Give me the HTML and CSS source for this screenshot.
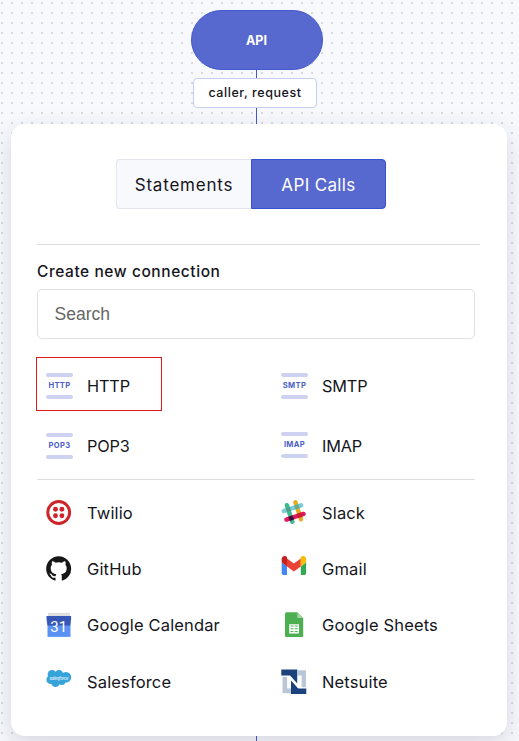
FILE: index.html
```html
<!DOCTYPE html>
<html lang="en">
<head>
<meta charset="utf-8">
<title>API connection</title>
<link rel="stylesheet" href="styles.css">
</head>
<body>
<main class="canvas">
  <div class="flow">
    <div class="start-node">API</div>
    <div class="line line-short"></div>
    <div class="params">caller, request</div>
    <div class="line line-long"></div>
  </div>
  <section class="panel">
    <div class="tabs"><button class="tab tab-statements">Statements</button><button class="tab tab-calls">API Calls</button></div>
    <hr class="rule rule-top">
    <h2 class="heading">Create new connection</h2>
    <div class="search">Search</div>
    <div class="grid protocols">
      <div class="item"><span class="proto">HTTP</span><span class="label caps">HTTP</span></div>
      <div class="item"><span class="proto">SMTP</span><span class="label caps">SMTP</span></div>
      <div class="item"><span class="proto">POP3</span><span class="label caps">POP3</span></div>
      <div class="item raised"><span class="proto">IMAP</span><span class="label caps">IMAP</span></div>
      <div class="highlight"></div>
    </div>
    <hr class="rule rule-mid">
    <div class="grid services">
      <div class="item">
        <svg class="icon" viewBox="0 0 26 26"><circle cx="12.7" cy="12.5" r="10.9" fill="none" stroke="#ce252b" stroke-width="3"/><g fill="#ce252b"><circle cx="9.5" cy="9.3" r="2.45"/><circle cx="15.9" cy="9.3" r="2.45"/><circle cx="9.5" cy="15.7" r="2.45"/><circle cx="15.9" cy="15.7" r="2.45"/></g></svg>
        <span class="label">Twilio</span></div>
      <div class="item">
        <svg class="icon" viewBox="0 0 26 26"><g stroke-width="4.4" stroke-linecap="round" fill="none"><path stroke="#3eb991" d="M5.9 5.2l5.4 16.6"/><path stroke="#e3ab20" d="M14.4 2.3l5.6 16.9"/><path stroke="#7acbdb" d="M2.9 11l17.2-5.7"/><path stroke="#e01765" d="M5.4 19.6l17.2-5.7"/><g stroke-linecap="butt"><path stroke="#4aa283" d="M6.7 7.5l1.4 4.2"/><path stroke="#6ca982" d="M15.2 4.7l1.4 4.2"/><path stroke="#361238" d="M9.5 16.1l1.4 4.2"/><path stroke="#cc2027" d="M18 13.2l1.4 4.2"/></g></g></svg>
        <span class="label">Slack</span></div>
      <div class="item">
        <svg class="icon" viewBox="0 0 16 16"><path transform="translate(.1 .1) scale(.963)" fill="#181717" fill-rule="evenodd" d="M8 0C3.58 0 0 3.58 0 8c0 3.54 2.29 6.53 5.47 7.59.4.07.55-.17.55-.38 0-.19-.01-.82-.01-1.49-2.01.37-2.53-.49-2.69-.94-.09-.23-.48-.94-.82-1.13-.28-.15-.68-.52-.01-.53.63-.01 1.08.58 1.23.82.72 1.21 1.87.87 2.33.66.07-.52.28-.87.51-1.07-1.78-.2-3.64-.89-3.64-3.95 0-.87.31-1.59.82-2.15-.08-.2-.36-1.02.08-2.12 0 0 .67-.21 2.2.82a7.6 7.6 0 014 0c1.53-1.04 2.2-.82 2.2-.82.44 1.1.16 1.92.08 2.12.51.56.82 1.27.82 2.15 0 3.07-1.87 3.75-3.65 3.95.29.25.54.73.54 1.48 0 1.07-.01 1.93-.01 2.2 0 .21.15.46.55.38A8.01 8.01 0 0016 8c0-4.42-3.58-8-8-8z"/></svg>
        <span class="label">GitHub</span></div>
      <div class="item">
        <svg class="icon" viewBox="0 0 26 26"><g transform="translate(0 -.8)"><path fill="#4285f4" d="M.7 7l5.3 4.2v8.6H2.4Q.7 19.8.7 18z"/><path fill="#34a853" d="M19.8 11.2L25.1 7v11q0 1.8-1.7 1.8h-3.6z"/><path fill="#ea4335" d="M6 3.2l6.9 5.2 6.9-5.2v8l-6.9 5.2L6 11.2z"/><path fill="#c5221f" d="M.7 7V4.1c0-3 3.1-4.3 5.3-2.3v9.4z"/><path fill="#fbbc04" d="M25.1 7V4.1c0-3-3.1-4.3-5.3-2.3v9.4z"/></g></svg>
        <span class="label">Gmail</span></div>
      <div class="item">
        <svg class="icon" viewBox="0 0 26 26"><path fill="#dedede" d="M2 .8h22v5H2z"/><path fill="#5b91f3" d="M1.5 9h23v15.9h-23z"/><path fill="#3757b7" d="M.5 4h24.6v3l-.9 6.5H1.5L.5 7z"/><text class="cal-text" x="12.8" y="20.3" text-anchor="middle">31</text></svg>
        <span class="label">Google Calendar</span></div>
      <div class="item">
        <svg class="icon" viewBox="0 0 26 26"><path fill="#4caf50" d="M4 1.8Q4 .3 5.5.3h10.9L22.2 6v17.4q0 1.5-1.5 1.5H5.5Q4 24.9 4 23.4z"/><path fill="#a5d4a6" d="M16.4.3L22.2 6h-5.8z"/><path fill="#fff" fill-rule="evenodd" d="M8.2 12.2H18v9.3H8.2zm1.4 1.4v1h2.9v-1zm4.2 0v1h2.9v-1zm-4.2 2.6v1h2.9v-1zm4.2 0v1h2.9v-1zm-4.2 2.7v1.2h2.9v-1.2zm4.2 0v1.2h2.9v-1.2z"/></svg>
        <span class="label">Google Sheets</span></div>
      <div class="item">
        <svg class="icon" viewBox="0 0 26 26"><g fill="#36a3da"><circle cx="6" cy="5.2" r="4.3"/><circle cx="13" cy="4.6" r="3.7"/><circle cx="20" cy="8.3" r="5.2"/><circle cx="4.8" cy="10.7" r="4.4"/><circle cx="9.5" cy="13.9" r="4.2"/><circle cx="15.7" cy="12.2" r="3.8"/><path d="M4 3h11l6 2v8H4z"/></g><text class="sf-text" x="13" y="10.5" text-anchor="middle" textLength="19">salesforce</text></svg>
        <span class="label">Salesforce</span></div>
      <div class="item">
        <svg class="icon" viewBox="0 0 26 26"><path fill="#bac7d6" d="M1.5 7.8h4.7v11.7h4v4.7H1.5zM17 1.3h8v17h-4.4V6.5H17z"/><path fill="#1c427d" d="M.3.4h16v14.1L9 6.5H.3zM10 11.5l7.3 8h8v5.4H10z"/><path fill="#fff" d="M6.5 7.5h3.1l7.1 9.3V7.2h2.9v11.2h-3L9.4 9.3v9.2H6.5z"/></svg>
        <span class="label">Netsuite</span></div>
    </div>
  </section>
  <div class="flow"><div class="line line-tail"></div></div>
</main>
</body>
</html>
```
FILE: styles.css
```css
* { box-sizing: border-box; }
body { margin: 0; font-family: Inter, sans-serif; color: #15151c; }
.canvas {
  width: 519px; height: 741px; overflow: hidden;
  padding: 10px 12px 0 11px;
  background: conic-gradient(from 90deg at 8px 8px, #d9dadf 25%, transparent 0) 3px 4px / 10px 10px, #f8f9fd;
}
.flow { display: flex; flex-direction: column; align-items: center; width: 491px; }
.start-node {
  flex: none; width: 132px; height: 60px; border-radius: 30px;
  background: #5768ce; border: 1px solid #4459d0; color: #fff;
  font-size: 12.5px; font-weight: 700; line-height: 59px; text-align: center;
}
.line { flex: none; width: 1px; background: #4459d0; }
.line-short { height: 8px; }
.line-long { height: 16px; }
.line-tail { height: 5px; }
.params {
  flex: none; width: 124px; height: 30px; margin-right: 3px;
  border: 1px solid #c8ceef; border-radius: 4px; background: #fff;
  font-size: 12.5px; font-weight: 500; letter-spacing: .56px; line-height: 27px; text-align: center;
}
.panel {
  position: relative; width: 496px; height: 612px; padding: 35px 26px 0;
  border-radius: 14px; background: #fff; box-shadow: 0 8px 24px rgba(40,40,75,.16);
}
.tabs { display: flex; width: 270px; height: 50px; margin-left: 79px; }
.tab { padding: 2px 0 0; font: 400 17px/46px Inter, sans-serif; }
.tab-statements { width: 135px; border: 1px solid #e5e6ed; border-right: 0; border-radius: 4px 0 0 4px; background: #f8f9fd; color: #15151c; letter-spacing: .8px; }
.tab-calls { width: 135px; border: 1px solid #3651cf; border-radius: 0 4px 4px 0; background: #5768ce; color: #fff; letter-spacing: .35px; }
.rule { height: 1px; margin: 0; border: 0; background: #dddddf; }
.rule-top { width: 443px; margin-top: 35px; }
.heading { margin: 17px 0 0; height: 22px; font-size: 15.5px; font-weight: 500; letter-spacing: .57px; line-height: 20px; white-space: nowrap; }
.search {
  width: 438px; height: 50px; margin-top: 5px; padding-left: 16.5px;
  border: 1px solid #dfdfe7; border-radius: 5px;
  font: 17.5px/48px "Liberation Sans", sans-serif; color: #666;
}
.grid { display: grid; grid-template-columns: 235px 203px; }
.protocols { position: relative; grid-auto-rows: 60px; margin-top: 17px; height: 123px; }
.item { display: flex; align-items: center; gap: 14px; padding-left: 9px; }
.proto {
  width: 27px; height: 26px; position: relative;
  font-size: 7.6px; font-weight: 700; letter-spacing: .35px; line-height: 26px; text-align: center; color: #4c5fc9;
}
.proto::before, .proto::after { content: ""; position: absolute; left: 0; width: 27px; height: 4px; border-radius: 2px; background: #ccd2ef; }
.proto::before { top: 0; }
.proto::after { bottom: 0; }
.raised .proto { margin-top: -2px; }
.label { margin-top: -1px; font-size: 16.5px; letter-spacing: .15px; line-height: 24px; white-space: nowrap; }
.caps { font-size: 16.3px; letter-spacing: -.15px; }
.highlight { position: absolute; left: -1px; top: 1px; width: 126px; height: 54px; border: 1px solid #e01b1b; }
.rule-mid { width: 438px; }
.services { grid-auto-rows: 56.2px; margin-top: 5px; }
.services .label { margin-top: 0; }
.icon { flex: none; width: 26px; height: 26px; }
.services .item { gap: 15px; }
.cal-text { font: 15px Roboto, sans-serif; fill: #fff; }
.sf-text { font: italic 5px "Open Sans", sans-serif; fill: #fff; }
```
